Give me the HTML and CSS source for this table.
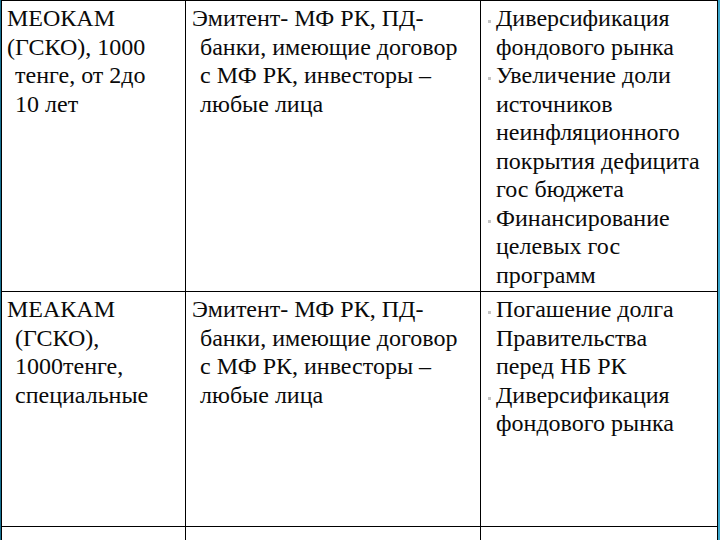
FILE: index.html
```html
<!DOCTYPE html>
<html lang="ru">
<head>
<meta charset="utf-8">
<title>Таблица ГЦБ</title>
<link rel="stylesheet" href="styles.css">
</head>
<body>
<div class="grid">
  <div class="cell c1">
    <span class="ln">МЕОКАМ</span>
    <span class="ln">(ГСКО), 1000</span>
    <span class="ln in">тенге, от 2до</span>
    <span class="ln in">10 лет</span>
  </div>
  <div class="cell c2">
    <span class="ln">Эмитент- МФ РК, ПД-</span>
    <span class="ln in">банки, имеющие договор</span>
    <span class="ln in">с МФ РК, инвесторы –</span>
    <span class="ln in">любые лица</span>
  </div>
  <div class="cell c3">
    <span class="ln b">Диверсификация</span>
    <span class="ln">фондового рынка</span>
    <span class="ln b">Увеличение доли</span>
    <span class="ln">источников</span>
    <span class="ln">неинфляционного</span>
    <span class="ln">покрытия дефицита</span>
    <span class="ln">гос бюджета</span>
    <span class="ln b">Финансирование</span>
    <span class="ln">целевых гос</span>
    <span class="ln">программ</span>
  </div>

  <div class="cell c1">
    <span class="ln">МЕАКАМ</span>
    <span class="ln in">(ГСКО),</span>
    <span class="ln in">1000тенге,</span>
    <span class="ln in">специальные</span>
  </div>
  <div class="cell c2">
    <span class="ln">Эмитент- МФ РК, ПД-</span>
    <span class="ln in">банки, имеющие договор</span>
    <span class="ln in">с МФ РК, инвесторы –</span>
    <span class="ln in">любые лица</span>
  </div>
  <div class="cell c3">
    <span class="ln b">Погашение долга</span>
    <span class="ln">Правительства</span>
    <span class="ln">перед НБ РК</span>
    <span class="ln b">Диверсификация</span>
    <span class="ln">фондового рынка</span>
  </div>

  <div class="cell c1"></div>
  <div class="cell c2"></div>
  <div class="cell c3"></div>
</div>
</body>
</html>
```

FILE: styles.css
```css
html {
  margin: 0;
  background: #ffffff;
}

body {
  margin: 0;
  width: 720px;
  height: 540px;
  overflow: hidden;
  font-family: "Liberation Serif", "DejaVu Serif", serif;
  font-size: 24px;
  line-height: 28.5px;
  color: #0a0a0a;
  background:
    linear-gradient(90deg, #156f90 0px, #2f9bc2 180px, #3aa6cc 262px);
}

.grid {
  margin-left: 1px;
  width: 717px;
  display: grid;
  grid-template-columns: 184px 295px 237px;
  grid-template-rows: 291px 235px 40px;
  border-left: 1px solid #000;
  border-top: 1px solid #000;
  box-sizing: border-box;
  background: #fff;
}

.cell {
  box-sizing: border-box;
  border-right: 1px solid #000;
  border-bottom: 1px solid #000;
  padding-top: 3px;
}

.c1 { padding-left: 5px; }
.c2 { padding-left: 6px; }
.c3 { padding-left: 15px; }

.ln {
  display: block;
  white-space: nowrap;
}

.ln.in { padding-left: 8px; }

.ln.b { position: relative; }

.ln.b::before {
  content: "";
  position: absolute;
  left: -8px;
  top: 16px;
  width: 3px;
  height: 3px;
  background: #c4c4c4;
}
```
